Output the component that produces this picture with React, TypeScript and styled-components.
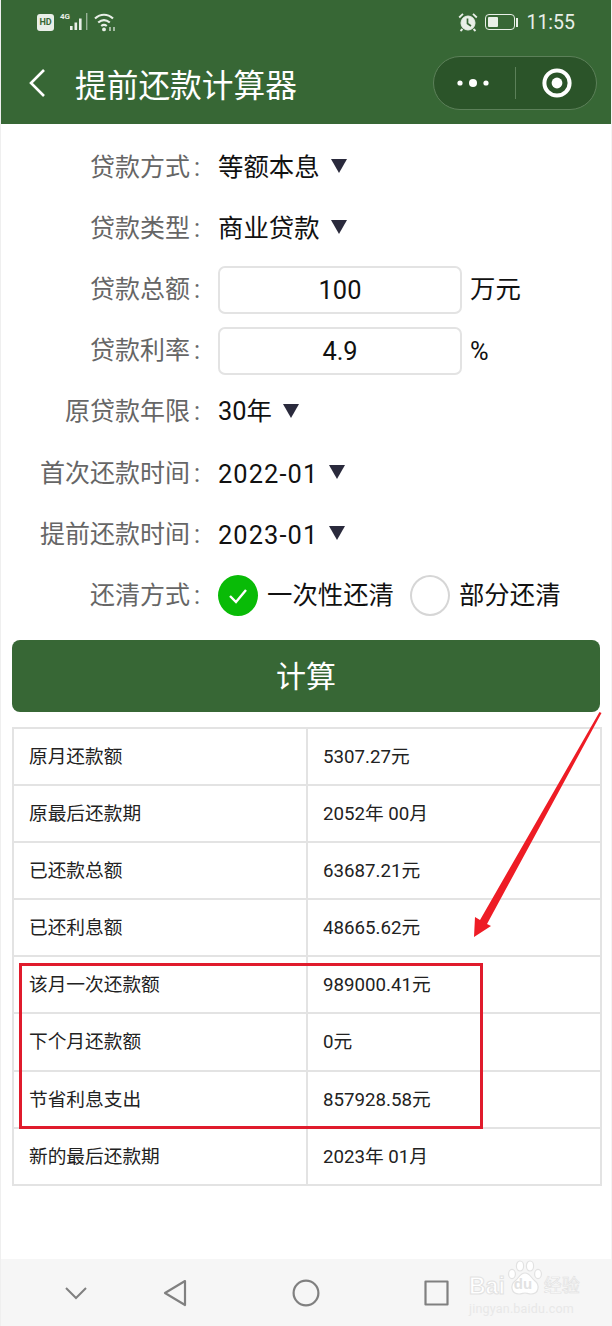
import React from "react";
import styled, { createGlobalStyle } from "styled-components";

const GlobalStyle = createGlobalStyle`
  html, body {
    margin: 0;
    padding: 0;
    background: #fff;
  }
  * {
    box-sizing: border-box;
  }
`;

const GREEN = "#376735";
const STATUS = "#e9efe8";
const FONT = `Roboto, "Noto Sans CJK SC", sans-serif`;

const results = [
  ["原月还款额", "5307.27元"],
  ["原最后还款期", "2052年 00月"],
  ["已还款总额", "63687.21元"],
  ["已还利息额", "48665.62元"],
  ["该月一次还款额", "989000.41元"],
  ["下个月还款额", "0元"],
  ["节省利息支出", "857928.58元"],
  ["新的最后还款期", "2023年 01月"],
];

const FieldLabel = ({ text }: { text: string }) => (
  <Label>
    {text}
    <Colon>:</Colon>
  </Label>
);

const App = () => {
  return (
    <Page>
      <GlobalStyle />
      <Header>
        <StatusBar>
          <StatusGroup>
            <HdBadge>HD</HdBadge>
            <NetLabel>4G</NetLabel>
            <svg width="18" height="18" viewBox="0 0 18 18" fill={STATUS}>
              <rect x="0" y="13" width="2.6" height="4" />
              <rect x="4.5" y="9.5" width="2.6" height="7.5" />
              <rect x="9" y="5.5" width="2.6" height="11.5" />
              <rect x="16" y="0" width="1.4" height="17" opacity="0.55" />
            </svg>
            <WifiIcon width="22" height="19" viewBox="0 0 22 19" fill="none" stroke={STATUS} strokeWidth="2.2">
              <path d="M1 5.5c5.5-5 12.5-5 18 0" />
              <path d="M4.2 9.5c3.8-3.2 7.8-3.2 11.6 0" />
              <path d="M7.2 13c1.8-1.4 3.8-1.4 5.6 0" />
              <circle cx="10" cy="16.4" r="1.9" fill={STATUS} stroke="none" />
              <path d="M16 14v4M20 14v4" strokeWidth="1.2" />
            </WifiIcon>
          </StatusGroup>
          <StatusGroup>
            <svg width="20" height="20" viewBox="0 0 20 20" fill="none" stroke={STATUS}>
              <circle cx="10" cy="11" r="7" fill={STATUS} />
              <path d="M9.5 6.5v5l3.5 2.5" stroke={GREEN} strokeWidth="1.7" />
              <path d="M1.2 5.5L5 1.8M18.8 5.5L15 1.8M4.5 17l-2 2M15.5 17l2 2" strokeWidth="1.8" />
            </svg>
            <Battery>
              <BatteryFill />
            </Battery>
            <BatteryNub />
            <Clock>11:55</Clock>
          </StatusGroup>
        </StatusBar>
        <NavBar>
          <svg width="22" height="32" viewBox="0 0 22 32" fill="none" stroke="#fff" strokeWidth="2.6">
            <path d="M18 3L5 16l13 13" />
          </svg>
          <Title>提前还款计算器</Title>
          <Capsule>
            <svg width="34" height="14" viewBox="0 0 34 14" fill="#fff">
              <circle cx="4" cy="7" r="2.6" />
              <circle cx="17" cy="7" r="4" />
              <circle cx="30" cy="7" r="2.6" />
            </svg>
            <CapsuleDivider />
            <svg width="32" height="32" viewBox="0 0 32 32" fill="none">
              <circle cx="16" cy="16" r="12.6" stroke="#fff" strokeWidth="4" />
              <circle cx="16" cy="16" r="5.4" fill="#fff" />
            </svg>
          </Capsule>
        </NavBar>
      </Header>

      <Form>
        <FormRow>
          <FieldLabel text="贷款方式" />
          <Value>
            <CjkText>等额本息</CjkText>
            <Caret />
          </Value>
        </FormRow>
        <FormRow>
          <FieldLabel text="贷款类型" />
          <Value>
            <CjkText>商业贷款</CjkText>
            <Caret />
          </Value>
        </FormRow>
        <FormRow>
          <FieldLabel text="贷款总额" />
          <Value>
            <NumberBox>100</NumberBox>
            <Unit $cjk>万元</Unit>
          </Value>
        </FormRow>
        <FormRow>
          <FieldLabel text="贷款利率" />
          <Value>
            <NumberBox>4.9</NumberBox>
            <Unit>%</Unit>
          </Value>
        </FormRow>
        <FormRow>
          <FieldLabel text="原贷款年限" />
          <Value>
            <CjkText>30年</CjkText>
            <Caret />
          </Value>
        </FormRow>
        <FormRow>
          <FieldLabel text="首次还款时间" />
          <Value>
            <DateText>2022-01</DateText>
            <Caret />
          </Value>
        </FormRow>
        <FormRow>
          <FieldLabel text="提前还款时间" />
          <Value>
            <DateText>2023-01</DateText>
            <Caret />
          </Value>
        </FormRow>
        <FormRow>
          <FieldLabel text="还清方式" />
          <Value>
            <Radio $checked>
              <svg width="22" height="18" viewBox="0 0 22 18" fill="none" stroke="#fff" strokeWidth="2.4">
                <path d="M3 9l6 6L19 3" />
              </svg>
            </Radio>
            <RadioText>一次性还清</RadioText>
            <Radio />
            <RadioText>部分还清</RadioText>
          </Value>
        </FormRow>
      </Form>

      <CalcButton>计算</CalcButton>

      <ResultTable>
        {results.map(([name, value]) => (
          <ResultRow key={name}>
            <ResultCell>{name}</ResultCell>
            <ResultCell>{value}</ResultCell>
          </ResultRow>
        ))}
      </ResultTable>

      <Highlight />
      <ArrowMark width="149" height="240" viewBox="0 0 149 240">
        <path d="M136.5 7L17 215l-5-3-1 20 17-11-4-2L138.5 8z" fill="#ee1c25" />
      </ArrowMark>

      <BottomBar>
        <svg width="24" height="14" viewBox="0 0 24 14" fill="none" stroke="#808080" strokeWidth="2">
          <path d="M2 2l10 10L22 2" />
        </svg>
        <svg width="24" height="28" viewBox="0 0 24 28" fill="none" stroke="#808080" strokeWidth="2.2" strokeLinejoin="round">
          <path d="M22 2L2 14l20 12z" />
        </svg>
        <svg width="28" height="28" viewBox="0 0 28 28" fill="none" stroke="#808080" strokeWidth="2.2">
          <circle cx="14" cy="14" r="12.4" />
        </svg>
        <svg width="25" height="26" viewBox="0 0 25 26" fill="none" stroke="#808080" strokeWidth="2.2" strokeLinejoin="round">
          <rect x="1.5" y="1.5" width="22" height="23" />
        </svg>
        <Watermark>
          <WatermarkLogo>
            <WatermarkWord>Bai</WatermarkWord>
            <PawWrap>
              <svg width="40" height="36" viewBox="0 0 40 36" fill="#fff" stroke="#e2e2e2" strokeWidth="1.2">
                <ellipse cx="7" cy="14" rx="3.4" ry="4.6" />
                <ellipse cx="15" cy="6" rx="3.6" ry="5" />
                <ellipse cx="25" cy="6" rx="3.6" ry="5" />
                <ellipse cx="33" cy="14" rx="3.4" ry="4.6" />
                <path d="M20 13c5 0 6 5 10 8 5 4 4 13-4 13-3 0-4-1-6-1s-3 1-6 1c-8 0-9-9-4-13 4-3 5-8 10-8z" />
              </svg>
              <PawLabel>du</PawLabel>
            </PawWrap>
            <WatermarkCjk>经验</WatermarkCjk>
          </WatermarkLogo>
          <WatermarkSub>jingyan.baidu.com</WatermarkSub>
        </Watermark>
      </BottomBar>
    </Page>
  );
};

export default App;

const Page = styled.div`
  position: relative;
  width: 612px;
  height: 1326px;
  overflow: hidden;
  background: #fff;
  border-left: 1px solid #efefef;
  border-right: 1px solid #f4f4f4;
  font-family: ${FONT};
  display: flex;
  flex-direction: column;
`;

const Header = styled.div`
  height: 124px;
  margin: 0 -1px;
  background: ${GREEN};
  flex-shrink: 0;
`;

const StatusBar = styled.div`
  height: 44px;
  padding: 0 37px 0 37px;
  display: flex;
  justify-content: space-between;
  align-items: center;
`;

const StatusGroup = styled.div`
  display: flex;
  align-items: center;
`;

const HdBadge = styled.div`
  width: 17px;
  height: 17px;
  border-radius: 3px;
  background: ${STATUS};
  color: ${GREEN};
  font-size: 9px;
  font-weight: 700;
  line-height: 17px;
  text-align: center;
`;

const NetLabel = styled.span`
  width: 10px;
  margin: -11px 0 0 6px;
  color: ${STATUS};
  font-size: 8px;
  font-weight: 700;
`;

const WifiIcon = styled.svg`
  margin-left: 6px;
`;

const Battery = styled.div`
  width: 30px;
  height: 16px;
  margin-left: 7px;
  padding: 2px;
  border: 1.5px solid ${STATUS};
  border-radius: 4px;
`;

const BatteryFill = styled.div`
  width: 10px;
  height: 100%;
  background: ${STATUS};
  border-radius: 1px;
`;

const BatteryNub = styled.div`
  width: 2px;
  height: 9px;
  margin-left: 1px;
  background: ${STATUS};
`;

const Clock = styled.span`
  margin-left: 8px;
  color: ${STATUS};
  font-size: 19.5px;
`;

const NavBar = styled.div`
  height: 80px;
  padding: 0 15px 2px 26px;
  display: flex;
  align-items: center;
`;

const Title = styled.div`
  margin: -1px 0 0 27px;
  color: #fff;
  font-size: 31.7px;
  flex: 1;
`;

const Capsule = styled.div`
  width: 164px;
  height: 54px;
  border-radius: 27px;
  background: #2b5429;
  border: 1px solid #5c8059;
  display: flex;
  align-items: center;
  justify-content: space-between;
  padding: 0 23px 0 22px;
`;

const CapsuleDivider = styled.div`
  width: 1px;
  height: 32px;
  background: #5c8059;
`;

const Form = styled.div`
  padding-top: 13px;
  display: flex;
  flex-direction: column;
`;

const FormRow = styled.div`
  height: 61.2px;
  display: grid;
  grid-template-columns: 199px 1fr;
  column-gap: 18px;
  align-items: center;
  font-size: 25px;
`;

const Label = styled.div`
  color: #666;
  text-align: right;
  white-space: nowrap;
  padding-bottom: 6px;
`;

const Colon = styled.span`
  margin-left: 4px;
`;

const Value = styled.div`
  color: #111;
  display: flex;
  align-items: center;
  font-size: 25.4px;
`;

const CjkText = styled.span`
  padding-bottom: 6px;
`;

const DateText = styled.span`
  letter-spacing: 1.1px;
`;

const Caret = styled.span`
  width: 0;
  height: 0;
  margin: 0 0 3px 11px;
  border-left: 8px solid transparent;
  border-right: 8px solid transparent;
  border-top: 14px solid #2a2a3c;
`;

const NumberBox = styled.div`
  width: 244px;
  height: 48px;
  border: 2px solid #e3e3e3;
  border-radius: 7px;
  text-align: center;
  line-height: 45px;
`;

const Unit = styled.span<{ $cjk?: boolean }>`
  margin-left: 8px;
  padding-bottom: ${(props) => (props.$cjk ? "6px" : "0")};
`;

const Radio = styled.div<{ $checked?: boolean }>`
  width: 40px;
  height: 41px;
  border-radius: 50%;
  background: ${(props) => (props.$checked ? "#09bb07" : "#fff")};
  border: 2px solid ${(props) => (props.$checked ? "#09bb07" : "#d6d6d6")};
  display: flex;
  align-items: center;
  justify-content: center;
`;

const RadioText = styled.span`
  margin: 0 16px 0 9px;
  padding-bottom: 6px;
`;

const CalcButton = styled.div`
  margin: 13px 11px 0 11px;
  height: 72px;
  border-radius: 8px;
  background: ${GREEN};
  color: #fff;
  font-size: 30px;
  line-height: 74px;
  text-align: center;
`;

const ResultTable = styled.div`
  margin: 15px 9px 0 11px;
  border: 2px solid #e3e3e3;
  border-bottom-width: 0;
`;

const ResultRow = styled.div`
  height: 57.2px;
  display: grid;
  grid-template-columns: 292px 1fr;
  border-bottom: 2px solid #e3e3e3;
`;

const ResultCell = styled.div`
  padding-left: 15px;
  color: #222;
  font-size: 18.7px;
  line-height: 57px;
  white-space: nowrap;

  & + & {
    border-left: 2px solid #e3e3e3;
  }
`;

const Highlight = styled.div`
  position: absolute;
  left: 18px;
  top: 963px;
  width: 464px;
  height: 166px;
  border: 3px solid #e01b2c;
`;

const ArrowMark = styled.svg`
  position: absolute;
  left: 462px;
  top: 705px;
`;

const BottomBar = styled.div`
  position: relative;
  margin: auto -1px 0;
  height: 67px;
  background: #f6f6f6;
  display: grid;
  grid-template-columns: 152px 46px 216px 44px;
  align-items: center;
  justify-items: center;
`;

const Watermark = styled.div`
  position: absolute;
  left: 469px;
  top: 1px;
  width: 110px;
`;

const WatermarkLogo = styled.div`
  height: 39px;
  display: flex;
  align-items: flex-end;
  white-space: nowrap;
`;

const WatermarkWord = styled.span`
  color: #fff;
  -webkit-text-stroke: 1px #e2e2e2;
  font-family: "Liberation Sans", sans-serif;
  font-size: 23px;
  font-weight: 700;
  line-height: 26px;
  width: 36px;
`;

const PawWrap = styled.div`
  position: relative;
  width: 37px;
  height: 39px;
  flex-shrink: 0;
`;

const PawLabel = styled.span`
  position: absolute;
  left: 9px;
  top: 15px;
  color: #e2e2e2;
  font-family: "Liberation Sans", sans-serif;
  font-size: 15px;
  font-weight: 700;
`;

const WatermarkCjk = styled.span`
  margin-left: 2px;
  color: #fff;
  -webkit-text-stroke: 0.7px #e2e2e2;
  font-size: 18px;
  line-height: 26px;
`;

const WatermarkSub = styled.div`
  margin-top: 2px;
  color: #e8e8e8;
  font-size: 12.5px;
  line-height: 15px;
  letter-spacing: 0.2px;
  white-space: nowrap;
`;
